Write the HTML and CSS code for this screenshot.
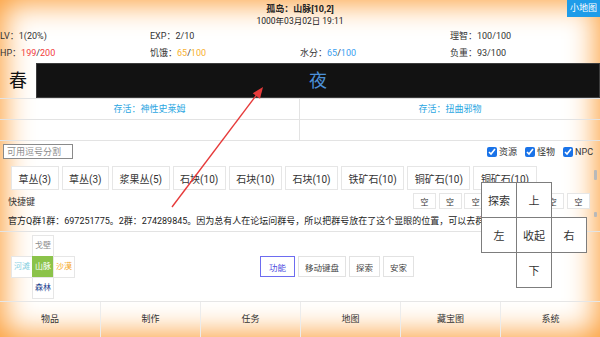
FILE: index.html
```html
<!DOCTYPE html>
<html lang="zh">
<head>
<meta charset="utf-8">
<title>孤岛</title>
<link rel="stylesheet" href="styles.css">
</head>
<body>
<div class="app">
  <header class="top">
    <div class="title">孤岛：山脉[10,2]</div>
    <div class="date">1000年03月02日 19:11</div>
    <button class="minimap">小地图</button>
  </header>

  <section class="stats">
    <div>LV：1(20%)</div>
    <div>EXP：2/10</div>
    <div></div>
    <div>理智：100/100</div>
    <div>HP：<span class="red">199</span>/<span class="red">200</span></div>
    <div>饥饿：<span class="orange">65</span>/<span class="orange">100</span></div>
    <div>水分：<span class="blue">65</span>/<span class="blue">100</span></div>
    <div>负重：93/100</div>
  </section>

  <section class="season">
    <div class="spring">春</div>
    <div class="night">夜</div>
  </section>

  <section class="survive">
    <div class="cell">存活：神性史莱姆</div>
    <div class="cell">存活：扭曲邪物</div>
    <div class="cell"></div>
    <div class="cell"></div>
  </section>

  <section class="filter">
    <input class="search" type="text" placeholder="可用逗号分割">
    <div class="checks">
      <label class="check"><input type="checkbox" checked>资源</label>
      <label class="check"><input type="checkbox" checked>怪物</label>
      <label class="check"><input type="checkbox" checked>NPC</label>
    </div>
  </section>

  <section class="resources">
    <div class="items">
      <button class="res">草丛(3)</button>
      <button class="res">草丛(3)</button>
      <button class="res">浆果丛(5)</button>
      <button class="res">石块(10)</button>
      <button class="res">石块(10)</button>
      <button class="res">石块(10)</button>
      <button class="res">铁矿石(10)</button>
      <button class="res">铜矿石(10)</button>
      <button class="res">铜矿石(10)</button>
    </div>
    <div class="vscroll"><span class="thumb"></span></div>
  </section>

  <section class="shortcut">
    <div class="sc-label">快捷键</div>
    <div class="sc-keys">
      <button class="key">空</button>
      <button class="key">空</button>
      <button class="key">空</button>
      <button class="key">空</button>
      <button class="key">空</button>
      <button class="key">空</button>
      <button class="key">空</button>
    </div>
    <div class="vscroll"></div>
  </section>

  <section class="notice">
    <div class="notice-text">官方Q群1群：697251775。2群：274289845。因为总有人在论坛问群号，所以把群号放在了这个显眼的位置，可以去群里找人交流一下。</div>
    <div class="vscroll small"><span class="thumb"></span></div>
  </section>

  <section class="mapzone">
    <div class="cross">
      <div class="mc n">戈壁</div>
      <div class="mc w">河滩</div>
      <div class="mc c">山脉</div>
      <div class="mc e">沙漠</div>
      <div class="mc s">森林</div>
    </div>
    <div class="actions">
      <button class="act primary">功能</button>
      <button class="act">移动键盘</button>
      <button class="act">探索</button>
      <button class="act">安家</button>
    </div>
  </section>

  <nav class="tabs">
    <div class="tab">物品</div>
    <div class="tab">制作</div>
    <div class="tab">任务</div>
    <div class="tab">地图</div>
    <div class="tab">藏宝图</div>
    <div class="tab">系统</div>
  </nav>

  <div class="dpad">
    <button class="dk d1">探索</button>
    <button class="dk d2">上</button>
    <button class="dk d3">左</button>
    <button class="dk d4">收起</button>
    <button class="dk d5">右</button>
    <button class="dk d6">下</button>
  </div>

  <svg class="arrow" width="600" height="337" viewBox="0 0 600 337">
    <line x1="172" y1="207" x2="258" y2="93" stroke="#e63b3b" stroke-width="1.4"/>
    <polygon points="263,87 252.8,93.3 260,98.7" fill="#e63b3b"/>
  </svg>
</div>
</body>
</html>
```

FILE: styles.css
```css
* { box-sizing: border-box; margin: 0; padding: 0; }
html, body { width: 600px; height: 337px; overflow: hidden; }
body {
  font-family: Roboto, "Noto Sans CJK SC", sans-serif;
  color: #333;
  background: #fff;
}
button { font-family: inherit; }

.app {
  width: 600px;
  height: 337px;
  position: relative;
  overflow: hidden;
  display: flex;
  flex-direction: column;
  background: #fff;
  box-shadow: inset 0 0 30px 3px #fb9a30;
}

/* header */
.top {
  display: grid;
  grid-template-columns: 1fr auto 1fr;
  grid-template-rows: 12px 12px;
  height: 28px;
  padding-top: 3px;
}
.title {
  grid-column: 2; grid-row: 1;
  font-size: 9px; font-weight: bold; line-height: 12px;
  text-align: center; color: #222;
}
.date {
  grid-column: 2; grid-row: 2;
  font-size: 8.5px; line-height: 12px;
  text-align: center; color: #222;
}
.minimap {
  grid-column: 3; grid-row: 1 / 3;
  justify-self: end; align-self: start;
  margin-top: -3px;
  height: 17px; padding: 0 3px;
  border: none; background: #1e9ce9; color: #fff;
  font-size: 9px; line-height: 17px;
}

/* stats */
.stats {
  display: grid;
  grid-template-columns: repeat(4, 150px);
  grid-auto-rows: 17px;
  font-size: 9px; line-height: 17px; color: #333;
  margin-bottom: 1px;
}
.red { color: #f23c3c; }
.orange { color: #f7b12f; }
.blue { color: #3a9ef0; }

/* season */
.season { display: flex; height: 35px; }
.spring {
  width: 36px; font-size: 18px; line-height: 35px;
  text-align: center; color: #111;
}
.night {
  flex: 1; background: #121212; border: 1px solid #3c3c3c;
  color: #4b90d8; font-size: 18px; line-height: 33px; text-align: center;
}

/* survive rows */
.survive {
  display: grid;
  grid-template-columns: 300px 300px;
  border-top: 1px solid #e3e3e3;
}
.survive .cell {
  height: 21px; border-bottom: 1px solid #e3e3e3;
  font-size: 9px; line-height: 20px; text-align: center; color: #2aa6e2;
}
.survive .cell:nth-child(odd) { border-right: 1px solid #e3e3e3; }

/* filter */
.filter {
  display: flex; align-items: center; justify-content: space-between;
  height: 21px; padding: 0 7px 0 3px;
}
.search {
  width: 70px; height: 15px; border: 1px solid #8a8a8a; background: #fff;
  font-family: inherit; font-size: 9px; padding: 0 3px; color: #333;
}
.search::placeholder { color: #8d8d8d; }
.checks { display: flex; gap: 8px; }
.check {
  display: flex; align-items: center; gap: 2px;
  font-size: 9px; color: #333;
}
.check input {
  width: 10px; height: 10px; margin: 0; accent-color: #1a73e8;
}

/* resources */
.resources { display: flex; height: 30px; padding-top: 4px; }
.items {
  flex: 1; display: flex; gap: 3px; padding-left: 11px; overflow: hidden;
}
.res {
  flex: none; height: 24px; padding: 0 6.5px;
  border: 1px solid #e6e6e6; background: #fff; color: #333;
  font-size: 10px;
}
.vscroll {
  width: 10px; flex: none; display: flex; justify-content: center;
  padding-top: 4px;
}
.thumb { width: 3px; height: 10px; background: #b9b9b9; border-radius: 1px; }
.vscroll.small { padding-top: 0; }
.vscroll.small .thumb { height: 5px; }

/* shortcut */
.shortcut { display: flex; height: 20px; align-items: flex-start; }
.sc-label { font-size: 9px; line-height: 18px; padding-left: 8px; flex: 1; margin-top: 1px; }
.sc-keys { display: flex; gap: 2.7px; margin-top: 1px; }
.key {
  width: 23px; height: 16px; border: 1px solid #e6e6e6; background: #fff;
  font-size: 8px; color: #333;
}

/* notice */
.notice { display: flex; height: 20px; border-bottom: 1px solid #e3e3e3; }
.notice-text {
  flex: 1; overflow: hidden; white-space: nowrap;
  font-size: 9px; line-height: 16px; padding: 1px 0 0 8px; color: #222;
}

/* map zone */
.mapzone { flex: 1; display: flex; align-items: flex-start; }
.cross {
  display: grid;
  grid-template-columns: repeat(3, 21px);
  grid-template-rows: repeat(3, 21px);
  margin: 3px 0 0 11px;
}
.mc {
  border: 1px solid #e6e6e6; font-size: 8px; line-height: 19px; text-align: center;
  margin: 0 -1px -1px 0;
  background: #fff;
}
.mc.n { grid-column: 2; grid-row: 1; color: #8a8a8a; }
.mc.w { grid-column: 1; grid-row: 2; color: #86cfe0; }
.mc.c { grid-column: 2; grid-row: 2; color: #fff; background: #8bc34a; border-color: #8bc34a; }
.mc.e { grid-column: 3; grid-row: 2; color: #f5a623; }
.mc.s { grid-column: 2; grid-row: 3; color: #1d3f8f; }
.actions {
  flex: 1; display: flex; justify-content: center; gap: 3px;
  align-self: center;
}
.act {
  height: 21px; padding: 0 6px; border: 1px solid #e2e2e2; background: #fff;
  font-size: 8.5px; color: #444;
}
.act.primary { border-color: #6d6cf0; color: #4e4de0; padding: 0 8px; }

/* tabs */
.tabs {
  display: grid; grid-template-columns: repeat(6, 100px);
  height: 36px; border-top: 1px solid #e6e6e6;
}
.tab {
  font-size: 9px; line-height: 35px; text-align: center; color: #333;
  border-left: 1px solid #ececec;
}
.tab:first-child { border-left: none; }

/* dpad overlay */
.dpad {
  position: absolute; left: 481px; top: 182px;
  display: grid;
  grid-template-columns: repeat(3, 35px);
  grid-template-rows: repeat(3, 35px);
}
.dk {
  width: 36px; height: 36px; border: 1px solid #7d7d7d; background: #fff;
  font-size: 11px; color: #333;
}
.d1 { grid-column: 1; grid-row: 1; }
.d2 { grid-column: 2; grid-row: 1; }
.d3 { grid-column: 1; grid-row: 2; }
.d4 { grid-column: 2; grid-row: 2; }
.d5 { grid-column: 3; grid-row: 2; }
.d6 { grid-column: 2; grid-row: 3; }

.arrow { position: absolute; left: 0; top: 0; pointer-events: none; }
```
